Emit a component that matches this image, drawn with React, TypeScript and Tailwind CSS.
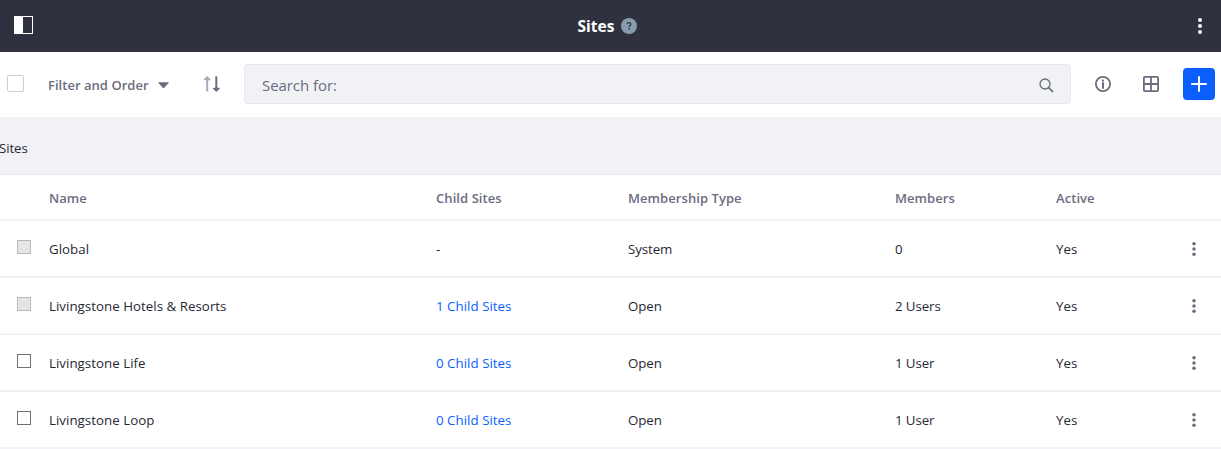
type Site = {
  name: string;
  children: string;
  type: string;
  members: string;
  disabled: boolean;
};

const sites: Site[] = [
  { name: "Global", children: "-", type: "System", members: "0", disabled: true },
  { name: "Livingstone Hotels & Resorts", children: "1 Child Sites", type: "Open", members: "2 Users", disabled: true },
  { name: "Livingstone Life", children: "0 Child Sites", type: "Open", members: "1 User", disabled: false },
  { name: "Livingstone Loop", children: "0 Child Sites", type: "Open", members: "1 User", disabled: false },
];

const columns = "grid grid-cols-[49px_387px_192px_267px_161px_130px_1fr] items-center";

function Header() {
  return (
    <header className="flex h-[52px] items-center justify-between bg-[#30313f] pr-[13px] pl-[14px] text-white">
      <svg className="mb-[2px] h-[18px] w-[19px]" viewBox="0 0 19 18">
        <rect x="0.5" y="0.5" width="18" height="17" fill="none" stroke="currentColor" />
        <rect width="9" height="18" fill="currentColor" />
      </svg>
      <div className="mr-[10px] flex items-center gap-[7px]">
        <h1 className="text-[15.5px] leading-5 font-bold">Sites</h1>
        <svg className="h-4 w-4" viewBox="0 0 16 16">
          <circle cx="8" cy="8" r="8" fill="#869cad" />
          <path d="M6.1 6.3C6.1 5.3 6.9 4.7 8 4.7s1.9.6 1.9 1.5c0 1.3-1.8 1.3-1.8 3" fill="none" stroke="#30313f" strokeWidth="1.2" />
          <rect x="7.4" y="10.2" width="1.4" height="1.4" fill="#30313f" />
        </svg>
      </div>
      <svg className="h-4 w-4" viewBox="0 0 16 16" fill="currentColor">
        <circle cx="8" cy="2" r="2" />
        <circle cx="8" cy="8" r="2" />
        <circle cx="8" cy="14" r="2" />
      </svg>
    </header>
  );
}

function Toolbar() {
  return (
    <div className="flex h-[65px] items-center bg-white pr-[6px] pb-px pl-[7px] text-[#6b6c7e]">
      <span className="mb-px h-[17px] w-[17px] shrink-0 rounded-[2px] border border-[#cdced9] bg-white" />
      <button className="ml-6 flex w-[121px] shrink-0 items-center justify-between">
        <span className="pt-0.5 text-[13px] leading-5 font-semibold tracking-[0.03px] whitespace-nowrap">Filter and Order</span>
        <svg className="mt-0.5 h-[7px] w-[11px]" viewBox="0 0 11 7">
          <path d="M0.7 0.3h9.6c.5 0 .6.5.3.8L6.2 5.7a1 1 0 0 1-1.4 0L.4 1.1C.1.8.2.3.7.3Z" fill="currentColor" />
        </svg>
      </button>
      <svg className="ml-[35px] h-4 w-4 shrink-0" viewBox="0 0 16 16">
        <g fill="#a7a9bc">
          <path d="M2.2 3.5h2V15.5h-2z" />
          <path d="M3.2 0 6.5 3.2q.4 1-.5 1H.4q-.9 0-.5-1Z" />
        </g>
        <g fill="#6b6c7e">
          <path d="M11.3.3h2v12h-2z" />
          <path d="M12.3 16 15.7 12.7q.4-1-.5-1H9.5q-.9 0-.5 1Z" />
        </g>
      </svg>
      <div className="ml-6 flex h-10 flex-1 items-center justify-between rounded border border-[#e7e7ed] bg-[#f1f2f5] pr-4 pl-[17px]">
        <span className="pt-px text-[15px] leading-5 tracking-[-0.06px]">Search for:</span>
        <svg className="mt-0.5 h-[15px] w-[15px]" viewBox="0 0 15 15" fill="none" stroke="currentColor" strokeWidth="1.3">
          <circle cx="6" cy="6" r="5" />
          <path d="m9.6 9.6 4 4" strokeWidth="1.6" strokeLinecap="round" />
        </svg>
      </div>
      <svg className="ml-6 h-4 w-4 shrink-0" viewBox="0 0 16 16">
        <circle cx="8" cy="8" r="7.1" fill="none" stroke="currentColor" strokeWidth="1.8" />
        <circle cx="8" cy="4.6" r="1.1" fill="currentColor" />
        <path d="M8 7v5" stroke="currentColor" strokeWidth="2" strokeLinecap="round" />
      </svg>
      <svg className="ml-8 h-4 w-4 shrink-0" viewBox="0 0 16 16" fill="none" stroke="currentColor" strokeWidth="1.8">
        <rect x="0.9" y="0.9" width="14.2" height="14.2" rx="1" />
        <path d="M8 1v14M1 8h14" />
      </svg>
      <button className="ml-6 flex h-8 w-8 shrink-0 items-center justify-center rounded bg-[#0b5fff] text-white">
        <svg className="h-4 w-4" viewBox="0 0 16 16" fill="none" stroke="currentColor" strokeWidth="2" strokeLinecap="round">
          <path d="M8 1v14M1 8h14" />
        </svg>
      </button>
    </div>
  );
}

function Row({ site }: { site: Site }) {
  return (
    <div className={`${columns} h-[57px] border-b-2 border-[#f1f2f5]`}>
      <span
        className={
          site.disabled
            ? "mb-[3px] ml-[17px] h-[14px] w-[14px] border border-[#b9b9b9] bg-[#e5e5e5]"
            : "mb-[3px] ml-[17px] h-[14px] w-[14px] border border-[#707070] bg-white"
        }
      />
      <span className="pt-px">{site.name}</span>
      <span className={site.children === "-" ? "pt-px" : "pt-px text-[#0b5fff]"}>{site.children}</span>
      <span className="pt-px tracking-[-0.1px]">{site.type}</span>
      <span className="pt-px tracking-[-0.1px]">{site.members}</span>
      <span className="pt-px">Yes</span>
      <svg className="mt-px h-[14px] w-4 text-[#6b6c7e]" viewBox="0 0 16 14" fill="currentColor">
        <circle cx="8" cy="1.8" r="1.75" />
        <circle cx="8" cy="7" r="1.75" />
        <circle cx="8" cy="12.2" r="1.75" />
      </svg>
    </div>
  );
}

export default function App() {
  return (
    <div className="h-[449px] w-[1221px] overflow-hidden bg-white font-['Open_Sans','Noto_Sans',sans-serif] text-[#272833]">
      <Header />
      <Toolbar />
      <div className="flex h-[58px] items-center border-b border-[#e7e7ed] bg-[#f1f2f5] pt-[7px] text-[13.3px] tracking-[-0.1px]">
        <span className="-ml-px">Sites</span>
      </div>
      <main className="text-[13.3px] leading-5 tracking-[0.03px]">
        <div className={`${columns} h-[46px] border-b-2 border-[#f1f2f5] text-[13px] font-semibold tracking-[0.07px] text-[#6b6c7e]`}>
          <span />
          <span className="pt-0.5">Name</span>
          <span className="pt-0.5">Child Sites</span>
          <span className="pt-0.5">Membership Type</span>
          <span className="pt-0.5">Members</span>
          <span className="pt-0.5">Active</span>
        </div>
        {sites.map((site) => (
          <Row key={site.name} site={site} />
        ))}
      </main>
    </div>
  );
}
